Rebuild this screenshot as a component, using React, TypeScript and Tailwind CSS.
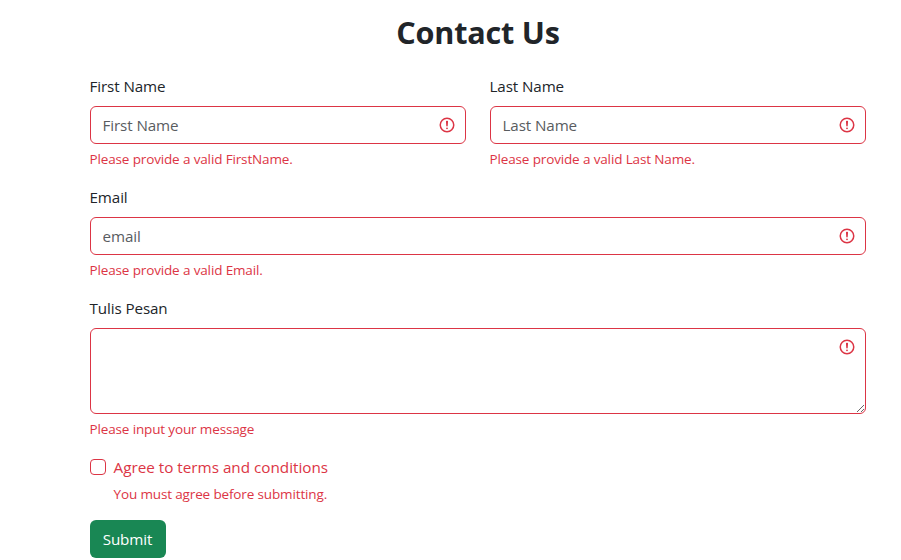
import React from "react";

function Alert() {
  return (
    <svg viewBox="0 0 12 12" width="18" height="18" fill="none" stroke="#dc3545" className="pointer-events-none absolute right-[10px] top-[10px]">
      <circle cx="6" cy="6" r="4.5" />
      <path strokeLinejoin="round" d="M5.8 3.6h.4L6 6.5z" />
      <circle cx="6" cy="8.2" r=".6" fill="#dc3545" stroke="none" />
    </svg>
  );
}

const box =
  "block w-full rounded-md border border-[#dc3545] bg-white pl-[11.5px] pr-3 text-[15.2px] tracking-[-0.1px] text-[#212529] outline-none placeholder:text-[#595c5f] placeholder:opacity-100";

function Label({ children }: { children: React.ReactNode }) {
  return <label className="-ml-[0.5px] mb-2 block h-6 text-[15.2px] leading-6 tracking-[-0.1px]">{children}</label>;
}

function Feedback({ children }: { children: React.ReactNode }) {
  return <div className="-ml-[0.5px] mt-[5px] h-5 text-[13.5px] leading-[21px] tracking-[-0.14px] text-[#dc3545]">{children}</div>;
}

function Field({ label, placeholder, error }: { label: string; placeholder: string; error: string }) {
  return (
    <div className="flex-1">
      <Label>{label}</Label>
      <div className="relative">
        <input className={box + " h-[38px] pb-px"} placeholder={placeholder} />
        <Alert />
      </div>
      <Feedback>{error}</Feedback>
    </div>
  );
}

export default function App() {
  return (
    <div className="h-[560px] w-[901px] overflow-hidden bg-white pl-[90px] pr-[35px] pt-[13px] font-['Segoe_UI','Open_Sans','Noto_Sans',sans-serif] text-[15px] leading-6 text-[#212529]">
      <h1 className="mb-[23px] text-center text-[30.6px] font-bold leading-[38px] tracking-[-0.2px]">Contact Us</h1>
      <form className="flex flex-col" onSubmit={(e) => e.preventDefault()}>
        <div className="flex gap-6">
          <Field label="First Name" placeholder="First Name" error="Please provide a valid FirstName." />
          <Field label="Last Name" placeholder="Last Name" error="Please provide a valid Last Name." />
        </div>
        <div className="mt-4 flex">
          <Field label="Email" placeholder="email" error="Please provide a valid Email." />
        </div>
        <div className="mt-4">
          <Label>Tulis Pesan</Label>
          <div className="relative">
            <textarea className={box + " h-[86px] resize-y"} />
            <Alert />
          </div>
          <Feedback>Please input your message</Feedback>
        </div>
        <div className="mt-4 flex gap-2 text-[#dc3545]">
          <input type="checkbox" className="mt-1 size-4 appearance-none rounded border border-[#dc3545]" />
          <div>
            <div className="-ml-[0.5px] h-6 text-[15.25px]">Agree to terms and conditions</div>
            <Feedback>You must agree before submitting.</Feedback>
          </div>
        </div>
        <button className="mt-4 h-[38px] w-[76px] rounded-md bg-[#198754] pb-px pr-px text-[15.2px] tracking-[-0.1px] text-white">Submit</button>
      </form>
    </div>
  );
}
